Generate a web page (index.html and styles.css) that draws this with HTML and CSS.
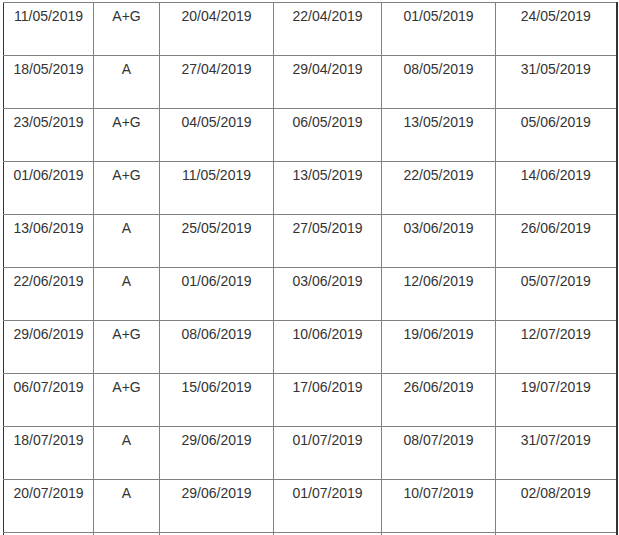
FILE: index.html
```html
<!DOCTYPE html>
<html>
<head>
<meta charset="utf-8">
<link rel="stylesheet" href="styles.css">
</head>
<body>
<table class="schedule">
<colgroup>
<col class="c1"><col class="c2"><col class="c3"><col class="c4"><col class="c5"><col class="c6">
</colgroup>
<tbody>
<tr><td>11/05/2019</td><td>A+G</td><td>20/04/2019</td><td>22/04/2019</td><td>01/05/2019</td><td>24/05/2019</td></tr>
<tr><td>18/05/2019</td><td>A</td><td>27/04/2019</td><td>29/04/2019</td><td>08/05/2019</td><td>31/05/2019</td></tr>
<tr><td>23/05/2019</td><td>A+G</td><td>04/05/2019</td><td>06/05/2019</td><td>13/05/2019</td><td>05/06/2019</td></tr>
<tr><td>01/06/2019</td><td>A+G</td><td>11/05/2019</td><td>13/05/2019</td><td>22/05/2019</td><td>14/06/2019</td></tr>
<tr><td>13/06/2019</td><td>A</td><td>25/05/2019</td><td>27/05/2019</td><td>03/06/2019</td><td>26/06/2019</td></tr>
<tr><td>22/06/2019</td><td>A</td><td>01/06/2019</td><td>03/06/2019</td><td>12/06/2019</td><td>05/07/2019</td></tr>
<tr><td>29/06/2019</td><td>A+G</td><td>08/06/2019</td><td>10/06/2019</td><td>19/06/2019</td><td>12/07/2019</td></tr>
<tr><td>06/07/2019</td><td>A+G</td><td>15/06/2019</td><td>17/06/2019</td><td>26/06/2019</td><td>19/07/2019</td></tr>
<tr><td>18/07/2019</td><td>A</td><td>29/06/2019</td><td>01/07/2019</td><td>08/07/2019</td><td>31/07/2019</td></tr>
<tr><td>20/07/2019</td><td>A</td><td>29/06/2019</td><td>01/07/2019</td><td>10/07/2019</td><td>02/08/2019</td></tr>
<tr><td>&nbsp;</td><td>&nbsp;</td><td>&nbsp;</td><td>&nbsp;</td><td>&nbsp;</td><td>&nbsp;</td></tr>
</tbody>
</table>
</body>
</html>
```
FILE: styles.css
```css
html, body {
  margin: 0;
  padding: 0;
  background: #fff;
}
body {
  padding: 2px 0 0 3px;
  font-family: "Liberation Sans", Arial, sans-serif;
  font-size: 14px;
  color: #333;
}
.schedule {
  border-collapse: collapse;
  table-layout: fixed;
  width: 613px;
}
.c1 { width: 90px; }
.c2 { width: 66px; }
.c3 { width: 114px; }
.c4 { width: 108px; }
.c5 { width: 114px; }
.c6 { width: 121px; }
.schedule td {
  border: 1px solid #808080;
  height: 53px;
  padding: 5px 4px 0;
  box-sizing: border-box;
  text-align: center;
  vertical-align: top;
  line-height: 16px;
}
.schedule td:first-child {
  border-left-color: #333;
}
.schedule td:last-child {
  border-right: 2px solid #333;
}
```
